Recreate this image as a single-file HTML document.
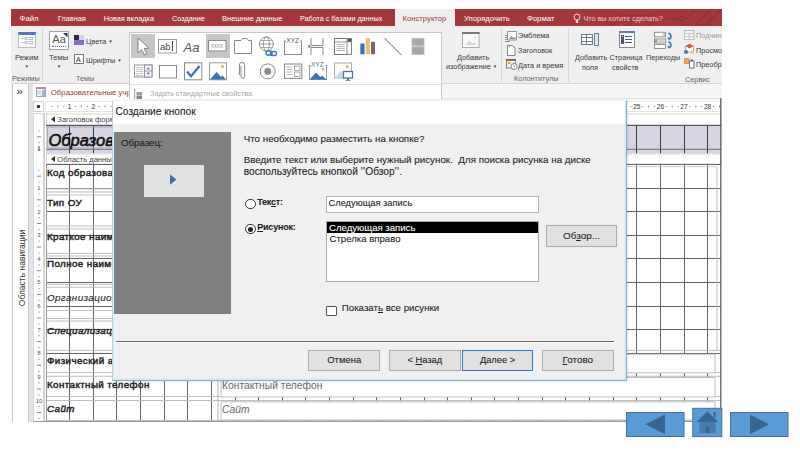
<!DOCTYPE html>
<html><head><meta charset="utf-8">
<style>
*{margin:0;padding:0;box-sizing:border-box}
html,body{width:800px;height:450px;overflow:hidden;background:#fff;font-family:"Liberation Sans",sans-serif}
.a{position:absolute}
.t{position:absolute;white-space:nowrap;line-height:1}
.tabs{position:absolute;left:11px;top:9px;width:711px;height:17px;background:#a4373a;color:#fff;font-size:7.7px}
.tabs .t{top:5.6px}
.rib{position:absolute;left:11px;top:26px;width:711px;height:58px;background:#efefef;border-bottom:1px solid #d4d4d4;font-size:7.3px;color:#444}
.sep{position:absolute;width:1px;background:#d6d6d6}
.dl{-webkit-text-stroke:0.08px currentColor}
</style></head><body>
<!-- tab bar -->
<div class="tabs">
  <span class="t" style="left:8.6px">Файл</span>
  <span class="t" style="left:47px;font-size:7.3px">Главная</span>
  <span class="t" style="left:92.7px;font-size:7.3px">Новая вкладка</span>
  <span class="t" style="left:161px;font-size:7.3px">Создание</span>
  <span class="t" style="left:211px;font-size:7.5px">Внешние данные</span>
  <span class="t" style="left:289px;font-size:7.2px">Работа с базами данных</span>
  <div class="a" style="left:383.5px;top:0;width:60.5px;height:17px;background:#efefef"></div>
  <span class="t" style="left:391.5px;color:#a4373a">Конструктор</span>
  <svg class="a" style="left:0;top:0" width="711" height="17" viewBox="0 0 711 17"><g fill="none" stroke="#8f2b30" stroke-width="1.2" opacity="0.7"><path d="M655 9.5 H668"/><circle cx="670.5" cy="9.5" r="2"/><path d="M672.5 9.5 H676 L684 1"/><path d="M684 17 L700 0"/><path d="M694 17 L710 0"/><path d="M600 17 L612 6 H640"/><path d="M-2 12 L10 3"/></g></svg>
  <span class="t" style="left:453px">Упорядочить</span>
  <span class="t" style="left:516px">Формат</span>
  <svg class="a" style="left:562px;top:3.5px" width="8" height="11" viewBox="0 0 8 11"><circle cx="4" cy="4" r="3" fill="none" stroke="#f3dada" stroke-width="1"/><rect x="2.8" y="7" width="2.4" height="3" fill="#f3dada"/></svg>
  <span class="t" style="left:572.4px;font-size:7.2px;top:5.8px;color:#ecc8c8">Что вы хотите сделать?</span>
</div>
<!-- ribbon -->
<div class="rib"></div>
<div class="a" style="left:0;top:0;width:800px;height:450px;font-size:7.3px;color:#3a3a3a">
  <!-- Режим -->
  <div class="a" style="left:18px;top:32px;width:17.5px;height:16px;background:#fcfcfc;border:1px solid #b8bec8;border-top:3px solid #4a7ab8"></div>
  <div class="a" style="left:21px;top:38px;width:3.5px;height:1px;background:#c0c4cc"></div>
  <div class="a" style="left:24.5px;top:37px;width:8.5px;height:3px;border:1px solid #c0c4cc"></div>
  <div class="a" style="left:21px;top:42px;width:3.5px;height:1px;background:#c0c4cc"></div>
  <div class="a" style="left:24.5px;top:41px;width:8.5px;height:3px;border:1px solid #c0c4cc"></div>
  <span class="t" style="left:15px;top:53.5px;font-size:7.6px">Режим</span>
  <span class="t" style="left:24.6px;top:64.5px;font-size:4.5px">▼</span>
  <span class="t" style="left:12px;top:75.3px;color:#666">Режимы</span>
  <div class="sep" style="left:42px;top:28px;height:54px"></div>
  <!-- Темы -->
  <div class="a" style="left:49px;top:31px;width:20px;height:19px;background:#fff;border:1.5px solid #a0a0a0"></div>
  <span class="t" style="left:52.3px;top:34.3px;font-size:11px;color:#555">Aa</span>
  <div class="a" style="left:62.5px;top:32.5px;width:5px;height:5px;background:#333;clip-path:polygon(0 0,100% 0,100% 100%)"></div>
  <div class="a" style="left:52px;top:46px;width:14px;height:1px;border-top:1px dotted #7a6ab0"></div>
  <span class="t" style="left:49px;top:53.5px;font-size:7.6px">Темы</span>
  <span class="t" style="left:56.8px;top:64.5px;font-size:4.5px">▼</span>
  <!-- Цвета -->
  <div class="a" style="left:74px;top:35px;width:10px;height:10px;background:#8c6cc8"></div>
  <div class="a" style="left:74px;top:35px;width:5px;height:5px;background:#2a2a3a"></div>
  <div class="a" style="left:79px;top:35px;width:5px;height:5px;background:#d8d0e8"></div>
  <span class="t" style="left:86px;top:37.5px;font-size:7.3px">Цвета <span style="font-size:4.5px;vertical-align:1.5px">▼</span></span>
  <!-- Шрифты -->
  <div class="a" style="left:74px;top:54px;width:10px;height:10px;background:#fff;border:1px solid #777"></div>
  <span class="t" style="left:76px;top:56px;font-size:7px;color:#333">A</span>
  <span class="t" style="left:86px;top:56.7px;font-size:7.3px">Шрифты <span style="font-size:4.5px;vertical-align:1.5px">▼</span></span>
  <span class="t" style="left:76px;top:75px;color:#666">Темы</span>
  <!-- Добавить изображение -->
  <svg class="a" style="left:0;top:0" width="800" height="100" viewBox="0 0 800 100">
    <rect x="462.5" y="32.5" width="16.5" height="15" fill="#fafafa" stroke="#a8a8a8" stroke-width="1"/>
    <rect x="462" y="32" width="17.5" height="2" fill="#777"/>
    <path d="M465.5 45 L469.5 40.5 L472.5 43.5 L474 42 L476.5 45 Z" fill="#c8d8e8"/>
    <circle cx="475" cy="37.5" r="0.9" fill="#e8c8a0"/>
    <path d="M507.5 31.5 h9 v8.5 h-9z" fill="#fff" stroke="#7a8a9a" stroke-width="0.9"/>
    <path d="M509 39 L511.5 36 L513.5 38 L515.5 36.5 V39.5z" fill="#7a9ac0"/>
    <path d="M505 35.5 h2 M505 37.5 h2 M505 39.5 h2 M505 41.5 h5" stroke="#777" stroke-width="0.8"/>
    <path d="M507.5 45.5 h5 l2.5 2.5 v7.5 h-7.5z" fill="#fff" stroke="#777" stroke-width="0.9"/>
    <rect x="508.5" y="46.5" width="2" height="1" fill="#f0a040"/>
    <rect x="506.5" y="59.5" width="9" height="8.5" fill="#f8f0e0" stroke="#777" stroke-width="0.9"/>
    <rect x="506" y="59" width="10" height="1.8" fill="#666"/>
    <rect x="508" y="62" width="2.5" height="2" fill="#e8a050"/>
    <circle cx="514" cy="66.5" r="3" fill="#fff" stroke="#5a7fa8" stroke-width="0.9"/>
    <path d="M514 64.8 v1.8 h1.3" fill="none" stroke="#5a7fa8" stroke-width="0.6"/>
  </svg>
  <span class="t" style="left:457px;top:53.5px">Добавить</span>
  <span class="t" style="left:446px;top:63.3px">изображение <span style="font-size:4.5px;vertical-align:1.5px">▼</span></span>
  <div class="sep" style="left:501px;top:28px;height:54px"></div>
  <!-- Колонтитулы -->
  
  <span class="t" style="left:518px;top:32px">Эмблема</span>
  
  <span class="t" style="left:518px;top:46.5px">Заголовок</span>
  
  
  <span class="t" style="left:518px;top:61.5px">Дата и время</span>
  <span class="t" style="left:514px;top:75px;color:#666">Колонтитулы</span>
  <div class="sep" style="left:568px;top:28px;height:54px"></div>
  <!-- Добавить поля -->
  <div class="a" style="left:581px;top:34px;width:12px;height:11px;background:#fff;border:1px solid #6b7b8b"></div>
  <div class="a" style="left:581px;top:37px;width:12px;height:1px;background:#6b7b8b"></div>
  <div class="a" style="left:581px;top:41px;width:12px;height:1px;background:#6b7b8b"></div>
  <div class="a" style="left:586px;top:34px;width:1px;height:11px;background:#6b7b8b"></div>
  <div class="a" style="left:594px;top:33px;width:5px;height:13px;background:#dde6f2;border:1px solid #6b7b8b"></div>
  <span class="t" style="left:575px;top:53.5px">Добавить</span>
  <span class="t" style="left:582px;top:63.5px">поля</span>
  <!-- Страница свойств -->
  <div class="a" style="left:619px;top:31px;width:16px;height:17px;background:#fff;border:1px solid #8a8a8a;border-top:2px solid #4f81bd"></div>
  <div class="a" style="left:622px;top:36px;width:1px;height:1px;box-shadow:0 0 0 1px #556,0 3px 0 1px #556,0 6px 0 1px #556"></div>
  <div class="a" style="left:625px;top:36px;width:7px;height:1px;box-shadow:0 3px 0 #556,0 6px 0 #556;background:#556"></div>
  <span class="t" style="left:609.5px;top:53.5px">Страница</span>
  <span class="t" style="left:612px;top:63.5px">свойств</span>
  <!-- Переходы -->
  <svg class="a" style="left:0;top:0" width="800" height="100" viewBox="0 0 800 100">
    <rect x="654.5" y="32.3" width="11" height="4.5" fill="#fff" stroke="#888" stroke-width="0.9"/>
    <rect x="662.5" y="32.8" width="2.5" height="3.5" fill="#ccc"/>
    <rect x="654.5" y="39" width="11" height="4" fill="#fff" stroke="#888" stroke-width="0.9"/>
    <rect x="655" y="39.5" width="2.5" height="3" fill="#999"/>
    <path d="M658.5 41 h6" stroke="#999" stroke-width="1"/>
    <rect x="654.5" y="44.5" width="11" height="4" fill="#fff" stroke="#888" stroke-width="0.9"/>
    <path d="M668.5 33 q3 1.5 2.5 4.5 q-0.5 1.5 -2.5 2" fill="none" stroke="#3b78c0" stroke-width="1.4"/>
    <path d="M667 38.3 l2.5 -1.5 l0 3z" fill="#3b78c0"/>
    <path d="M668.5 41.5 q3 1.5 2.5 4.5 q-0.5 1.5 -2.5 2" fill="none" stroke="#3b78c0" stroke-width="1.4"/>
    <path d="M667 46.8 l2.5 -1.5 l0 3z" fill="#3b78c0"/>
    <rect x="684.5" y="30.5" width="9.5" height="9" fill="#f6f6f6" stroke="#b8b8b8" stroke-width="0.9"/>
    <path d="M684.5 33.5 h9.5 M684.5 36.5 h9.5 M689 33.5 v6" stroke="#c4c4c4" stroke-width="0.8"/>
    <path d="M685.5 46 h8 v6 h-8z" fill="#fff" stroke="#999" stroke-width="0.8"/>
    <path d="M685.5 46 l4 -2.2 l4 2.2 l-4 2.5z" fill="#d05a48"/>
    <circle cx="686" cy="52" r="2" fill="#3b78c0"/>
    <circle cx="692.5" cy="52.3" r="1.7" fill="#e8d090"/>
    <path d="M684.5 58.5 h4.5 v5 h-4.5z" fill="#f0a060" stroke="#e08040" stroke-width="0.8"/>
    <rect x="689.5" y="61" width="4.5" height="7" fill="#fff" stroke="#4a6a90" stroke-width="0.9"/>
    <rect x="690.5" y="59.5" width="2.5" height="1.5" fill="#4a6a90"/>
  </svg>
  <span class="t" style="left:646px;top:53.5px">Переходы</span>
  <!-- Сервис -->
  <span class="t" style="left:696px;top:32px;color:#a0a0a0">Подчиненная форма</span>
  <span class="t" style="left:696px;top:46.5px">Просмотреть код</span>
  <span class="t" style="left:696px;top:60.5px">Преобразовать</span>
  <span class="t" style="left:685px;top:75.5px;color:#666">Сервис</span>
</div>
<div class="a" style="left:722px;top:0;width:78px;height:450px;background:#fff"></div>
<!-- doc tab strip -->
<div class="a" style="left:11px;top:84px;width:711px;height:14px;background:#f5f5f5"></div>
<!-- nav pane -->
<div class="a" style="left:12px;top:84px;width:17px;height:338px;background:#fff;border-left:1px solid #c8c8c8;border-right:1px solid #c8c8c8"></div>
<div class="a" style="left:29px;top:84px;width:4px;height:338px;background:#e4e4e4"></div>
<!-- form tab -->
<div class="a" style="left:33px;top:84px;width:97px;height:14px;background:#fff"></div>
<span class="t" style="left:16.5px;top:85.8px;font-size:11px;color:#333">»</span>
<span class="t" style="left:21.8px;top:268px;font-size:8.5px;color:#333;transform:translate(-50%,-50%) rotate(-90deg)">Область навигации</span>
<svg class="a" style="left:36px;top:87px" width="10" height="10" viewBox="0 0 10 10"><rect x="0.5" y="0.5" width="9" height="9" fill="#eef2f8" stroke="#9aa5b8" stroke-width="1"/><rect x="0.5" y="0.5" width="9" height="1.5" fill="#c87890"/><rect x="6" y="3" width="3" height="6" fill="#9fb4d8"/><path d="M1.5 4.5h3.5M1.5 6.5h3.5" stroke="#b0b8c8" stroke-width="0.8"/></svg>
<span class="t" style="left:50.8px;top:89px;font-size:7.8px;color:#a4373a">Образовательные учреждения</span>
<!-- designer -->
<!--FORM--><svg class="a" style="left:0;top:0" width="800" height="450" viewBox="0 0 800 450"><rect x="33" y="98" width="689" height="324" fill="#fff"/><rect x="33.5" y="101.5" width="10" height="10" fill="#fff" stroke="#d0d0d0" stroke-width="1"/><rect x="37.2" y="105.2" width="2.6" height="2.6" fill="#000"/><line x1="130" y1="98.8" x2="721" y2="98.8" stroke="#d4d4d4" stroke-width="1"/><rect x="45.5" y="101.5" width="676" height="10" fill="#fff" stroke="#e6e6e6" stroke-width="1"/><rect x="33.5" y="113.5" width="10" height="308" fill="#fff" stroke="#d8d8d8" stroke-width="1"/><line x1="44.5" y1="113" x2="44.5" y2="422" stroke="#cfcfcf" stroke-width="1"/><rect x="51.4" y="106" width="1" height="1" fill="#777"/><rect x="57.3" y="105" width="1" height="3" fill="#aaa"/><rect x="63.2" y="106" width="1" height="1" fill="#777"/><rect x="75.0" y="106" width="1" height="1" fill="#777"/><rect x="80.9" y="105" width="1" height="3" fill="#aaa"/><rect x="86.9" y="106" width="1" height="1" fill="#777"/><rect x="98.7" y="106" width="1" height="1" fill="#777"/><rect x="104.6" y="105" width="1" height="3" fill="#aaa"/><rect x="110.5" y="106" width="1" height="1" fill="#777"/><rect x="122.3" y="106" width="1" height="1" fill="#777"/><rect x="128.2" y="105" width="1" height="3" fill="#aaa"/><rect x="134.1" y="106" width="1" height="1" fill="#777"/><rect x="145.9" y="106" width="1" height="1" fill="#777"/><rect x="151.8" y="105" width="1" height="3" fill="#aaa"/><rect x="157.7" y="106" width="1" height="1" fill="#777"/><rect x="169.6" y="106" width="1" height="1" fill="#777"/><rect x="175.5" y="105" width="1" height="3" fill="#aaa"/><rect x="181.4" y="106" width="1" height="1" fill="#777"/><rect x="193.2" y="106" width="1" height="1" fill="#777"/><rect x="199.1" y="105" width="1" height="3" fill="#aaa"/><rect x="205.0" y="106" width="1" height="1" fill="#777"/><rect x="216.8" y="106" width="1" height="1" fill="#777"/><rect x="222.7" y="105" width="1" height="3" fill="#aaa"/><rect x="228.6" y="106" width="1" height="1" fill="#777"/><rect x="240.4" y="106" width="1" height="1" fill="#777"/><rect x="246.4" y="105" width="1" height="3" fill="#aaa"/><rect x="252.3" y="106" width="1" height="1" fill="#777"/><rect x="264.1" y="106" width="1" height="1" fill="#777"/><rect x="270.0" y="105" width="1" height="3" fill="#aaa"/><rect x="275.9" y="106" width="1" height="1" fill="#777"/><rect x="287.7" y="106" width="1" height="1" fill="#777"/><rect x="293.6" y="105" width="1" height="3" fill="#aaa"/><rect x="299.5" y="106" width="1" height="1" fill="#777"/><rect x="311.3" y="106" width="1" height="1" fill="#777"/><rect x="317.2" y="105" width="1" height="3" fill="#aaa"/><rect x="323.2" y="106" width="1" height="1" fill="#777"/><rect x="335.0" y="106" width="1" height="1" fill="#777"/><rect x="340.9" y="105" width="1" height="3" fill="#aaa"/><rect x="346.8" y="106" width="1" height="1" fill="#777"/><rect x="358.6" y="106" width="1" height="1" fill="#777"/><rect x="364.5" y="105" width="1" height="3" fill="#aaa"/><rect x="370.4" y="106" width="1" height="1" fill="#777"/><rect x="382.2" y="106" width="1" height="1" fill="#777"/><rect x="388.1" y="105" width="1" height="3" fill="#aaa"/><rect x="394.0" y="106" width="1" height="1" fill="#777"/><rect x="405.9" y="106" width="1" height="1" fill="#777"/><rect x="411.8" y="105" width="1" height="3" fill="#aaa"/><rect x="417.7" y="106" width="1" height="1" fill="#777"/><rect x="429.5" y="106" width="1" height="1" fill="#777"/><rect x="435.4" y="105" width="1" height="3" fill="#aaa"/><rect x="441.3" y="106" width="1" height="1" fill="#777"/><rect x="453.1" y="106" width="1" height="1" fill="#777"/><rect x="459.0" y="105" width="1" height="3" fill="#aaa"/><rect x="464.9" y="106" width="1" height="1" fill="#777"/><rect x="476.7" y="106" width="1" height="1" fill="#777"/><rect x="482.7" y="105" width="1" height="3" fill="#aaa"/><rect x="488.6" y="106" width="1" height="1" fill="#777"/><rect x="500.4" y="106" width="1" height="1" fill="#777"/><rect x="506.3" y="105" width="1" height="3" fill="#aaa"/><rect x="512.2" y="106" width="1" height="1" fill="#777"/><rect x="524.0" y="106" width="1" height="1" fill="#777"/><rect x="529.9" y="105" width="1" height="3" fill="#aaa"/><rect x="535.8" y="106" width="1" height="1" fill="#777"/><rect x="547.6" y="106" width="1" height="1" fill="#777"/><rect x="553.5" y="105" width="1" height="3" fill="#aaa"/><rect x="559.5" y="106" width="1" height="1" fill="#777"/><rect x="571.3" y="106" width="1" height="1" fill="#777"/><rect x="577.2" y="105" width="1" height="3" fill="#aaa"/><rect x="583.1" y="106" width="1" height="1" fill="#777"/><rect x="594.9" y="106" width="1" height="1" fill="#777"/><rect x="600.8" y="105" width="1" height="3" fill="#aaa"/><rect x="606.7" y="106" width="1" height="1" fill="#777"/><rect x="618.5" y="106" width="1" height="1" fill="#777"/><rect x="624.4" y="105" width="1" height="3" fill="#aaa"/><rect x="630.3" y="106" width="1" height="1" fill="#777"/><rect x="642.2" y="106" width="1" height="1" fill="#777"/><rect x="648.1" y="105" width="1" height="3" fill="#aaa"/><rect x="654.0" y="106" width="1" height="1" fill="#777"/><rect x="665.8" y="106" width="1" height="1" fill="#777"/><rect x="671.7" y="105" width="1" height="3" fill="#aaa"/><rect x="677.6" y="106" width="1" height="1" fill="#777"/><rect x="689.4" y="106" width="1" height="1" fill="#777"/><rect x="695.3" y="105" width="1" height="3" fill="#aaa"/><rect x="701.2" y="106" width="1" height="1" fill="#777"/><rect x="713.0" y="106" width="1" height="1" fill="#777"/><rect x="719.0" y="105" width="1" height="3" fill="#aaa"/><rect x="46.5" y="114.0" width="675" height="10.5" fill="#fff" stroke="#d8d8d8" stroke-width="1"/><path d="M55 116.2 L51 119.2 L55 122.2 Z" fill="#333"/><rect x="46" y="125" width="675.5" height="28.5" fill="#d6d5e1"/><line x1="69.5" y1="125" x2="69.5" y2="153.5" stroke="#3c3c44" stroke-width="1"/><line x1="93.5" y1="125" x2="93.5" y2="153.5" stroke="#3c3c44" stroke-width="1"/><line x1="116.5" y1="125" x2="116.5" y2="153.5" stroke="#3c3c44" stroke-width="1"/><line x1="140.5" y1="125" x2="140.5" y2="153.5" stroke="#3c3c44" stroke-width="1"/><line x1="164.5" y1="125" x2="164.5" y2="153.5" stroke="#3c3c44" stroke-width="1"/><line x1="187.5" y1="125" x2="187.5" y2="153.5" stroke="#3c3c44" stroke-width="1"/><line x1="211.5" y1="125" x2="211.5" y2="153.5" stroke="#3c3c44" stroke-width="1"/><line x1="235.5" y1="125" x2="235.5" y2="153.5" stroke="#3c3c44" stroke-width="1"/><line x1="258.5" y1="125" x2="258.5" y2="153.5" stroke="#3c3c44" stroke-width="1"/><line x1="282.5" y1="125" x2="282.5" y2="153.5" stroke="#3c3c44" stroke-width="1"/><line x1="305.5" y1="125" x2="305.5" y2="153.5" stroke="#3c3c44" stroke-width="1"/><line x1="329.5" y1="125" x2="329.5" y2="153.5" stroke="#3c3c44" stroke-width="1"/><line x1="353.5" y1="125" x2="353.5" y2="153.5" stroke="#3c3c44" stroke-width="1"/><line x1="376.5" y1="125" x2="376.5" y2="153.5" stroke="#3c3c44" stroke-width="1"/><line x1="400.5" y1="125" x2="400.5" y2="153.5" stroke="#3c3c44" stroke-width="1"/><line x1="424.5" y1="125" x2="424.5" y2="153.5" stroke="#3c3c44" stroke-width="1"/><line x1="447.5" y1="125" x2="447.5" y2="153.5" stroke="#3c3c44" stroke-width="1"/><line x1="471.5" y1="125" x2="471.5" y2="153.5" stroke="#3c3c44" stroke-width="1"/><line x1="494.5" y1="125" x2="494.5" y2="153.5" stroke="#3c3c44" stroke-width="1"/><line x1="518.5" y1="125" x2="518.5" y2="153.5" stroke="#3c3c44" stroke-width="1"/><line x1="542.5" y1="125" x2="542.5" y2="153.5" stroke="#3c3c44" stroke-width="1"/><line x1="565.5" y1="125" x2="565.5" y2="153.5" stroke="#3c3c44" stroke-width="1"/><line x1="589.5" y1="125" x2="589.5" y2="153.5" stroke="#3c3c44" stroke-width="1"/><line x1="613.5" y1="125" x2="613.5" y2="153.5" stroke="#3c3c44" stroke-width="1"/><line x1="636.5" y1="125" x2="636.5" y2="153.5" stroke="#3c3c44" stroke-width="1"/><line x1="660.5" y1="125" x2="660.5" y2="153.5" stroke="#3c3c44" stroke-width="1"/><line x1="684.5" y1="125" x2="684.5" y2="153.5" stroke="#3c3c44" stroke-width="1"/><line x1="707.5" y1="125" x2="707.5" y2="153.5" stroke="#3c3c44" stroke-width="1"/><line x1="46" y1="149.3" x2="721.5" y2="149.3" stroke="#6a6a78" stroke-width="1"/><line x1="46" y1="125.5" x2="721.5" y2="125.5" stroke="#55555f" stroke-width="1"/><rect x="47.5" y="127" width="80" height="21" fill="none" stroke="#a0a0b0" stroke-width="0.8"/><rect x="46.5" y="154.0" width="675" height="10.0" fill="#fff" stroke="#d8d8d8" stroke-width="1"/><path d="M55 156.0 L51 159.0 L55 162.0 Z" fill="#333"/><line x1="46" y1="164.5" x2="721" y2="164.5" stroke="#656565" stroke-width="1"/><line x1="46" y1="188.5" x2="721" y2="188.5" stroke="#656565" stroke-width="1"/><line x1="46" y1="211.5" x2="721" y2="211.5" stroke="#656565" stroke-width="1"/><line x1="46" y1="235.5" x2="721" y2="235.5" stroke="#656565" stroke-width="1"/><line x1="46" y1="258.5" x2="721" y2="258.5" stroke="#656565" stroke-width="1"/><line x1="46" y1="282.5" x2="721" y2="282.5" stroke="#656565" stroke-width="1"/><line x1="46" y1="306.5" x2="721" y2="306.5" stroke="#656565" stroke-width="1"/><line x1="46" y1="329.5" x2="721" y2="329.5" stroke="#656565" stroke-width="1"/><line x1="46" y1="353.5" x2="721" y2="353.5" stroke="#656565" stroke-width="1"/><line x1="69.5" y1="164.4" x2="69.5" y2="421" stroke="#656565" stroke-width="1"/><line x1="93.5" y1="164.4" x2="93.5" y2="421" stroke="#656565" stroke-width="1"/><line x1="116.5" y1="164.4" x2="116.5" y2="421" stroke="#656565" stroke-width="1"/><line x1="140.5" y1="164.4" x2="140.5" y2="421" stroke="#656565" stroke-width="1"/><line x1="164.5" y1="164.4" x2="164.5" y2="421" stroke="#656565" stroke-width="1"/><line x1="187.5" y1="164.4" x2="187.5" y2="421" stroke="#656565" stroke-width="1"/><line x1="211.5" y1="164.4" x2="211.5" y2="421" stroke="#656565" stroke-width="1"/><line x1="235.5" y1="164.4" x2="235.5" y2="421" stroke="#656565" stroke-width="1"/><line x1="258.5" y1="164.4" x2="258.5" y2="421" stroke="#656565" stroke-width="1"/><line x1="282.5" y1="164.4" x2="282.5" y2="421" stroke="#656565" stroke-width="1"/><line x1="305.5" y1="164.4" x2="305.5" y2="421" stroke="#656565" stroke-width="1"/><line x1="329.5" y1="164.4" x2="329.5" y2="421" stroke="#656565" stroke-width="1"/><line x1="353.5" y1="164.4" x2="353.5" y2="421" stroke="#656565" stroke-width="1"/><line x1="376.5" y1="164.4" x2="376.5" y2="421" stroke="#656565" stroke-width="1"/><line x1="400.5" y1="164.4" x2="400.5" y2="421" stroke="#656565" stroke-width="1"/><line x1="424.5" y1="164.4" x2="424.5" y2="421" stroke="#656565" stroke-width="1"/><line x1="447.5" y1="164.4" x2="447.5" y2="421" stroke="#656565" stroke-width="1"/><line x1="471.5" y1="164.4" x2="471.5" y2="421" stroke="#656565" stroke-width="1"/><line x1="494.5" y1="164.4" x2="494.5" y2="421" stroke="#656565" stroke-width="1"/><line x1="518.5" y1="164.4" x2="518.5" y2="421" stroke="#656565" stroke-width="1"/><line x1="542.5" y1="164.4" x2="542.5" y2="421" stroke="#656565" stroke-width="1"/><line x1="565.5" y1="164.4" x2="565.5" y2="421" stroke="#656565" stroke-width="1"/><line x1="589.5" y1="164.4" x2="589.5" y2="421" stroke="#656565" stroke-width="1"/><line x1="613.5" y1="164.4" x2="613.5" y2="421" stroke="#656565" stroke-width="1"/><line x1="636.5" y1="164.4" x2="636.5" y2="421" stroke="#656565" stroke-width="1"/><line x1="660.5" y1="164.4" x2="660.5" y2="421" stroke="#656565" stroke-width="1"/><line x1="684.5" y1="164.4" x2="684.5" y2="421" stroke="#656565" stroke-width="1"/><line x1="707.5" y1="164.4" x2="707.5" y2="421" stroke="#656565" stroke-width="1"/><line x1="46" y1="188.8" x2="220" y2="188.8" stroke="#b8b8b8" stroke-width="0.9"/><line x1="46" y1="192" x2="220" y2="192" stroke="#b8b8b8" stroke-width="0.9"/><line x1="46" y1="195" x2="220" y2="195" stroke="#b8b8b8" stroke-width="0.9"/><line x1="46" y1="226" x2="220" y2="226" stroke="#b8b8b8" stroke-width="0.9"/><line x1="46" y1="229" x2="220" y2="229" stroke="#b8b8b8" stroke-width="0.9"/><line x1="46" y1="253.4" x2="220" y2="253.4" stroke="#b8b8b8" stroke-width="0.9"/><line x1="46" y1="256" x2="220" y2="256" stroke="#b8b8b8" stroke-width="0.9"/><line x1="46" y1="284.4" x2="220" y2="284.4" stroke="#b8b8b8" stroke-width="0.9"/><line x1="46" y1="287.3" x2="220" y2="287.3" stroke="#b8b8b8" stroke-width="0.9"/><line x1="46" y1="310.4" x2="220" y2="310.4" stroke="#b8b8b8" stroke-width="0.9"/><line x1="46" y1="318.5" x2="220" y2="318.5" stroke="#b8b8b8" stroke-width="0.9"/><line x1="46" y1="321" x2="220" y2="321" stroke="#b8b8b8" stroke-width="0.9"/><line x1="46" y1="350.4" x2="721" y2="350.4" stroke="#b8b8b8" stroke-width="0.9"/><line x1="46" y1="372.5" x2="721" y2="372.5" stroke="#b8b8b8" stroke-width="0.9"/><line x1="46" y1="376.3" x2="721" y2="376.3" stroke="#b8b8b8" stroke-width="0.9"/><line x1="46" y1="396.5" x2="721" y2="396.5" stroke="#b8b8b8" stroke-width="0.9"/><line x1="46" y1="400.5" x2="721" y2="400.5" stroke="#b8b8b8" stroke-width="0.9"/><line x1="46" y1="420.5" x2="721" y2="420.5" stroke="#b8b8b8" stroke-width="0.9"/><line x1="626" y1="166.7" x2="717" y2="166.7" stroke="#c4c4c4" stroke-width="0.9"/><line x1="46.5" y1="164.4" x2="46.5" y2="421" stroke="#999" stroke-width="1"/><rect x="221" y="354.3" width="494" height="18.5" fill="#fff" stroke="#c0c0c0" stroke-width="1"/><rect x="221" y="377.5" width="494" height="19.5" fill="#fff" stroke="#c0c0c0" stroke-width="1"/><rect x="221" y="401.8" width="494" height="18.2" fill="#fff" stroke="#c0c0c0" stroke-width="1"/><line x1="218" y1="376" x2="218" y2="421" stroke="#b0b0b0" stroke-width="1"/><line x1="720.8" y1="98" x2="720.8" y2="422" stroke="#555" stroke-width="1.2"/><line x1="717" y1="166.5" x2="717" y2="350" stroke="#c0c0c0" stroke-width="1"/><line x1="33" y1="421.5" x2="721" y2="421.5" stroke="#999" stroke-width="1"/><rect x="38.5" y="130.4" width="1" height="1" fill="#777"/><rect x="37" y="136.3" width="4" height="1" fill="#888"/><rect x="38.5" y="142.2" width="1" height="1" fill="#777"/><rect x="38.5" y="169.8" width="1" height="1" fill="#777"/><rect x="37" y="175.7" width="4" height="1" fill="#888"/><rect x="38.5" y="181.6" width="1" height="1" fill="#777"/><rect x="38.5" y="193.4" width="1" height="1" fill="#777"/><rect x="37" y="199.3" width="4" height="1" fill="#888"/><rect x="38.5" y="205.3" width="1" height="1" fill="#777"/><rect x="38.5" y="217.1" width="1" height="1" fill="#777"/><rect x="37" y="223.0" width="4" height="1" fill="#888"/><rect x="38.5" y="228.9" width="1" height="1" fill="#777"/><rect x="38.5" y="240.7" width="1" height="1" fill="#777"/><rect x="37" y="246.6" width="4" height="1" fill="#888"/><rect x="38.5" y="252.5" width="1" height="1" fill="#777"/><rect x="38.5" y="264.3" width="1" height="1" fill="#777"/><rect x="37" y="270.2" width="4" height="1" fill="#888"/><rect x="38.5" y="276.1" width="1" height="1" fill="#777"/><rect x="38.5" y="288.0" width="1" height="1" fill="#777"/><rect x="37" y="293.9" width="4" height="1" fill="#888"/><rect x="38.5" y="299.8" width="1" height="1" fill="#777"/><rect x="38.5" y="311.6" width="1" height="1" fill="#777"/><rect x="37" y="317.5" width="4" height="1" fill="#888"/><rect x="38.5" y="323.4" width="1" height="1" fill="#777"/><rect x="38.5" y="335.2" width="1" height="1" fill="#777"/><rect x="37" y="341.1" width="4" height="1" fill="#888"/><rect x="38.5" y="347.0" width="1" height="1" fill="#777"/><rect x="38.5" y="358.8" width="1" height="1" fill="#777"/><rect x="37" y="364.8" width="4" height="1" fill="#888"/><rect x="38.5" y="370.7" width="1" height="1" fill="#777"/><rect x="38.5" y="382.5" width="1" height="1" fill="#777"/><rect x="37" y="388.4" width="4" height="1" fill="#888"/><rect x="38.5" y="394.3" width="1" height="1" fill="#777"/><rect x="38.5" y="406.1" width="1" height="1" fill="#777"/><rect x="37" y="412.0" width="4" height="1" fill="#888"/><rect x="38.5" y="417.9" width="1" height="1" fill="#777"/></svg><span class="t" style="left:61.6px;top:104px;width:16px;text-align:center;font-size:6.6px;color:#333">1</span><span class="t" style="left:85.3px;top:104px;width:16px;text-align:center;font-size:6.6px;color:#333">2</span><span class="t" style="left:108.9px;top:104px;width:16px;text-align:center;font-size:6.6px;color:#333">3</span><span class="t" style="left:132.5px;top:104px;width:16px;text-align:center;font-size:6.6px;color:#333">4</span><span class="t" style="left:156.1px;top:104px;width:16px;text-align:center;font-size:6.6px;color:#333">5</span><span class="t" style="left:179.8px;top:104px;width:16px;text-align:center;font-size:6.6px;color:#333">6</span><span class="t" style="left:203.4px;top:104px;width:16px;text-align:center;font-size:6.6px;color:#333">7</span><span class="t" style="left:227.0px;top:104px;width:16px;text-align:center;font-size:6.6px;color:#333">8</span><span class="t" style="left:250.7px;top:104px;width:16px;text-align:center;font-size:6.6px;color:#333">9</span><span class="t" style="left:274.3px;top:104px;width:16px;text-align:center;font-size:6.6px;color:#333">10</span><span class="t" style="left:297.9px;top:104px;width:16px;text-align:center;font-size:6.6px;color:#333">11</span><span class="t" style="left:321.6px;top:104px;width:16px;text-align:center;font-size:6.6px;color:#333">12</span><span class="t" style="left:345.2px;top:104px;width:16px;text-align:center;font-size:6.6px;color:#333">13</span><span class="t" style="left:368.8px;top:104px;width:16px;text-align:center;font-size:6.6px;color:#333">14</span><span class="t" style="left:392.4px;top:104px;width:16px;text-align:center;font-size:6.6px;color:#333">15</span><span class="t" style="left:416.1px;top:104px;width:16px;text-align:center;font-size:6.6px;color:#333">16</span><span class="t" style="left:439.7px;top:104px;width:16px;text-align:center;font-size:6.6px;color:#333">17</span><span class="t" style="left:463.3px;top:104px;width:16px;text-align:center;font-size:6.6px;color:#333">18</span><span class="t" style="left:487.0px;top:104px;width:16px;text-align:center;font-size:6.6px;color:#333">19</span><span class="t" style="left:510.6px;top:104px;width:16px;text-align:center;font-size:6.6px;color:#333">20</span><span class="t" style="left:534.2px;top:104px;width:16px;text-align:center;font-size:6.6px;color:#333">21</span><span class="t" style="left:557.9px;top:104px;width:16px;text-align:center;font-size:6.6px;color:#333">22</span><span class="t" style="left:581.5px;top:104px;width:16px;text-align:center;font-size:6.6px;color:#333">23</span><span class="t" style="left:605.1px;top:104px;width:16px;text-align:center;font-size:6.6px;color:#333">24</span><span class="t" style="left:628.8px;top:104px;width:16px;text-align:center;font-size:6.6px;color:#333">25</span><span class="t" style="left:652.4px;top:104px;width:16px;text-align:center;font-size:6.6px;color:#333">26</span><span class="t" style="left:676.0px;top:104px;width:16px;text-align:center;font-size:6.6px;color:#333">27</span><span class="t" style="left:699.6px;top:104px;width:16px;text-align:center;font-size:6.6px;color:#333">28</span><span class="t" style="left:57.3px;top:116.3px;font-size:7.6px;color:#444">Заголовок формы</span><span class="t" style="left:57.3px;top:156.1px;font-size:7.6px;color:#444">Область данных</span><span class="t" style="left:34px;top:145.4px;width:10px;text-align:center;font-size:6px;color:#555">1</span><span class="t" style="left:34px;top:184.8px;width:10px;text-align:center;font-size:6px;color:#555">1</span><span class="t" style="left:34px;top:208.5px;width:10px;text-align:center;font-size:6px;color:#555">2</span><span class="t" style="left:34px;top:232.1px;width:10px;text-align:center;font-size:6px;color:#555">3</span><span class="t" style="left:34px;top:255.7px;width:10px;text-align:center;font-size:6px;color:#555">4</span><span class="t" style="left:34px;top:279.4px;width:10px;text-align:center;font-size:6px;color:#555">5</span><span class="t" style="left:34px;top:303.0px;width:10px;text-align:center;font-size:6px;color:#555">6</span><span class="t" style="left:34px;top:326.6px;width:10px;text-align:center;font-size:6px;color:#555">7</span><span class="t" style="left:34px;top:350.2px;width:10px;text-align:center;font-size:6px;color:#555">8</span><span class="t" style="left:34px;top:373.9px;width:10px;text-align:center;font-size:6px;color:#555">9</span><span class="t" style="left:34px;top:397.5px;width:10px;text-align:center;font-size:6px;color:#555">10</span><span class="t" style="left:34px;top:146px;width:10px;text-align:center;font-size:6px;color:#555">1</span><span class="t" style="left:47px;top:167.5px;font-size:9.8px;letter-spacing:0.4px;-webkit-text-stroke:0.45px #222;color:#222;font-style:normal">Код образовательного</span><span class="t" style="left:47px;top:198.0px;font-size:9.8px;letter-spacing:0.4px;-webkit-text-stroke:0.45px #222;color:#222;font-style:normal">Тип ОУ</span><span class="t" style="left:47px;top:231.7px;font-size:9.8px;letter-spacing:0.4px;-webkit-text-stroke:0.45px #222;color:#222;font-style:normal">Краткое наименование</span><span class="t" style="left:47px;top:259.3px;font-size:9.8px;letter-spacing:0.4px;-webkit-text-stroke:0.45px #222;color:#222;font-style:normal">Полное наименование</span><span class="t" style="left:47px;top:293.2px;font-size:9.8px;letter-spacing:0.4px;-webkit-text-stroke:0.45px #222;color:#222;font-style:italic;-webkit-text-stroke:0.15px #444">Организационно</span><span class="t" style="left:47px;top:325.6px;font-size:9.8px;letter-spacing:0.4px;-webkit-text-stroke:0.45px #222;color:#222;font-style:italic">Специализация</span><span class="t" style="left:47px;top:356.0px;font-size:9.8px;letter-spacing:0.4px;-webkit-text-stroke:0.45px #222;color:#222;font-style:normal">Физический адрес</span><span class="t" style="left:47px;top:380.0px;font-size:9.8px;letter-spacing:0.4px;-webkit-text-stroke:0.45px #222;color:#222;font-style:normal">Контактный телефон</span><span class="t" style="left:47px;top:404.0px;font-size:9.8px;letter-spacing:0.4px;-webkit-text-stroke:0.45px #222;color:#222;font-style:italic">Сайт</span><span class="t" style="left:48.5px;top:131.7px;font-size:16.5px;font-style:italic;color:#111;-webkit-text-stroke:0.6px #111">Образовательные учреждения</span><span class="t" style="left:222px;top:380.5px;font-size:10.3px;color:#666">Контактный телефон</span><span class="t" style="left:222px;top:404.5px;font-size:10.3px;font-style:italic;color:#666">Сайт</span><!--/FORM-->
<!-- gallery -->
<div class="a" style="left:129px;top:32px;width:313px;height:67px;background:#fff;border:1px solid #c8c8c8;border-bottom:none"></div>
<svg class="a" style="left:0;top:0" width="800" height="450" viewBox="0 0 800 450">
  <rect x="131" y="34" width="24" height="24" fill="#c6c6c6"/>
  <rect x="206" y="34" width="24" height="24" fill="#c6c6c6"/>
  <!-- pointer -->
  <path d="M138 38 L138 53 L141.5 49.5 L144.5 55 L147 53.8 L144.2 48.5 L149 48.2 Z" fill="#fff" stroke="#777" stroke-width="0.9" stroke-linejoin="round"/>
  <!-- ab| -->
  <rect x="158.5" y="39.5" width="18" height="13.5" fill="#fff" stroke="#999" stroke-width="1"/>
  <text x="160" y="50" font-size="9.5" fill="#444" font-family="Liberation Sans">ab</text>
  <rect x="172" y="41" width="1" height="10" fill="#444"/>
  <!-- Aa -->
  <text x="183.5" y="52" font-size="13" font-style="italic" fill="#555" font-family="Liberation Sans">Aa</text>
  <!-- button -->
  <rect x="208.5" y="40.5" width="17.5" height="10.5" fill="#fff" stroke="#888" stroke-width="1"/>
  <text x="211" y="48" font-size="4.5" fill="#888" font-family="Liberation Sans">XXXX</text>
  <!-- folder -->
  <path d="M234.5 40.5 L241 40.5 L242.5 38.5 L247 38.5 L248.5 40.5 L251.5 40.5 L251.5 53.5 L234.5 53.5 Z" fill="#fff" stroke="#888" stroke-width="1"/>
  <!-- globe -->
  <circle cx="266.4" cy="44" r="7" fill="#fff" stroke="#888" stroke-width="0.9"/>
  <ellipse cx="266.4" cy="44" rx="3" ry="7" fill="none" stroke="#888" stroke-width="0.8"/>
  <line x1="259.4" y1="44" x2="273.4" y2="44" stroke="#888" stroke-width="0.8"/>
  <line x1="260.5" y1="40.5" x2="272.3" y2="40.5" stroke="#888" stroke-width="0.7"/>
  <line x1="260.5" y1="47.5" x2="272.3" y2="47.5" stroke="#888" stroke-width="0.7"/>
  <rect x="266" y="51" width="6" height="4" rx="2" fill="none" stroke="#3b78c0" stroke-width="1.4"/>
  <rect x="270.5" y="51.5" width="6" height="4" rx="2" fill="none" stroke="#3b78c0" stroke-width="1.4"/>
  <!-- XYZ frame -->
  <rect x="284.5" y="41" width="17" height="13.5" fill="#fff" stroke="#888" stroke-width="1"/>
  <rect x="286" y="37" width="14" height="6" fill="#fff"/>
  <text x="286.3" y="43" font-size="6.5" fill="#555" font-family="Liberation Sans">XYZ</text>
  <!-- page break -->
  <path d="M311 38 V45.5 H323 V38 M311 55 V47.5 H323 V55" fill="none" stroke="#888" stroke-width="1"/>
  <path d="M308.5 44.5 L311 46.5 L308.5 48.5Z" fill="#3b78c0"/>
  <!-- combo/list -->
  <rect x="334.5" y="38.5" width="17" height="16" fill="#fff" stroke="#777" stroke-width="1"/>
  <rect x="347" y="38.5" width="4.5" height="16" fill="#fff" stroke="#777" stroke-width="0.8"/>
  <rect x="347.5" y="39" width="3.5" height="3" fill="#555"/>
  <line x1="334.5" y1="42" x2="347" y2="42" stroke="#777" stroke-width="0.8"/>
  <path d="M336.5 44.5h8M336.5 46.5h8M336.5 48.5h8M336.5 50.5h8" stroke="#999" stroke-width="0.7"/>
  <!-- chart -->
  <rect x="360.3" y="43.5" width="4.3" height="10.8" fill="#3d72b4"/>
  <rect x="365.7" y="38.3" width="4.2" height="16" fill="#e8c070"/>
  <rect x="371" y="41.8" width="4" height="12.5" fill="#707070"/>
  <!-- line -->
  <line x1="384.5" y1="38" x2="401.5" y2="55.2" stroke="#666" stroke-width="1"/>
  <!-- gray boxes -->
  <rect x="412" y="38.3" width="12" height="7.5" fill="#a8a8a8" stroke="#bbb" stroke-width="0.8"/>
  <rect x="412" y="46.8" width="12" height="7.7" fill="#a8a8a8" stroke="#bbb" stroke-width="0.8"/>
  <!-- row 2 -->
  <rect x="134.5" y="65" width="17.5" height="12" fill="#fff" stroke="#889" stroke-width="0.9"/>
  <path d="M136 67.5h7M136 69.5h7M136 71.5h7M136 73.5h7M136 75.5h7" stroke="#aaa" stroke-width="0.7"/>
  <rect x="144.5" y="65" width="7.5" height="12" fill="#f2f6fa" stroke="#889" stroke-width="0.9"/>
  <line x1="144.5" y1="71" x2="152" y2="71" stroke="#889" stroke-width="0.8"/>
  <path d="M146.5 69.3 L148.2 67.5 L150 69.3Z M146.5 72.7 L148.2 74.5 L150 72.7Z" fill="#555"/>
  <rect x="159.5" y="65.5" width="17" height="12.5" fill="#fff" stroke="#888" stroke-width="1"/>
  <rect x="184.5" y="62.8" width="17.3" height="17" fill="#fff" stroke="#888" stroke-width="1"/>
  <path d="M187 71.5 L191 76.3 L199.5 66" fill="none" stroke="#3d72b4" stroke-width="2.2"/>
  <rect x="209.5" y="62.8" width="17" height="17" fill="#fff" stroke="#999" stroke-width="1"/>
  <path d="M210 79.5 L216.5 72 L221 77 L222.5 75.5 L226 79.5Z" fill="#3d72b4"/>
  <circle cx="222.5" cy="66.5" r="1.6" fill="#e8b850"/>
  <!-- paperclip -->
  <path d="M241 66 V76.5 A1.8 1.8 0 0 0 244.6 76.5 V65 A2.6 2.6 0 0 0 239.4 65 V75" fill="none" stroke="#888" stroke-width="1"/>
  <!-- radio -->
  <circle cx="267.7" cy="71.4" r="7.5" fill="#fff" stroke="#888" stroke-width="1"/>
  <circle cx="267.7" cy="71.4" r="3.4" fill="#888"/>
  <!-- list control -->
  <rect x="284.5" y="64" width="17.3" height="14.4" fill="#fff" stroke="#888" stroke-width="1"/>
  <path d="M286.5 67h6M286.5 69.5h6M286.5 72h6M286.5 74.5h6" stroke="#aaa" stroke-width="0.8"/>
  <rect x="294.5" y="66" width="5.5" height="4.5" fill="#fff" stroke="#999" stroke-width="0.8"/>
  <rect x="294.5" y="72" width="5.5" height="4.5" fill="#fff" stroke="#999" stroke-width="0.8"/>
  <!-- XYZ image -->
  <rect x="309.5" y="65.5" width="17" height="14" fill="#fff" stroke="#999" stroke-width="1"/>
  <path d="M309.5 79.5 L316 72.5 L320.5 77 L322 75.5 L326.5 79.5Z" fill="#3d72b4"/>
  <circle cx="323" cy="69" r="1.5" fill="#e8b850"/>
  <rect x="311" y="61.5" width="14" height="5.5" fill="#fff"/>
  <text x="311" y="67.3" font-size="6.5" fill="#3d72b4" font-family="Liberation Sans">XYZ</text>
  <!-- image monitor -->
  <rect x="334.5" y="63" width="17" height="15" fill="#fff" stroke="#aaa" stroke-width="1"/>
  <path d="M335 78 L341 70.5 L345 75 L345 78Z" fill="#c8d8ea"/>
  <circle cx="347.3" cy="66.5" r="1.5" fill="#e8b850"/>
  <rect x="343.5" y="71.5" width="9" height="6.5" fill="#fff" stroke="#3d72b4" stroke-width="1.2"/>
  <path d="M347 78.5 h2 v1.5 h1.5 v0.8 h-5 v-0.8 h1.5z" fill="#3d72b4"/>
  <!-- separator & set default -->
  <line x1="130" y1="84.5" x2="441" y2="84.5" stroke="#e2e2e2" stroke-width="1"/>
  <rect x="134" y="89" width="1.2" height="10" fill="#aaa"/>
  <rect x="136.5" y="92" width="5.5" height="3" fill="#999"/>
  <rect x="136.5" y="95.5" width="5.5" height="3.5" fill="#888"/>
</svg>
<span class="t" style="left:150px;top:89.5px;font-size:7.3px;color:#a8a8a8">Задать стан<u>д</u>артные свойства</span>
<!-- dialog -->
<!--DLG-->
<div class="a" style="left:112px;top:99.5px;width:514.5px;height:281px;background:#f0f0f0;border:1px solid #8eaec6;border-top-color:#e6f0f6;border-left-color:#b8cfe0;box-shadow:inset -1.5px -1.5px 0 #cdebf7,inset 1px 0 0 #dceff8,1px 1px 2px rgba(0,0,0,.1)"></div>
<div class="a" style="left:113px;top:100.5px;width:512px;height:23.5px;background:#fff"></div>
<span class="t dl" style="left:115.5px;top:106.7px;font-size:10.2px;color:#222">Создание кнопок</span>
<div class="a" style="left:114px;top:131.5px;width:117px;height:182.5px;background:#808080"></div>
<span class="t dl" style="left:121px;top:138px;font-size:9.7px;color:#1a1a1a">Образец:</span>
<div class="a" style="left:144px;top:164.5px;width:60px;height:32px;background:#e1e1e1"></div>
<div class="a" style="left:169.8px;top:174.2px;width:6.6px;height:10.7px;background:#3f6fa8;clip-path:polygon(0 0,100% 50%,0 100%)"></div>
<span class="t dl" style="left:243.7px;top:133.5px;font-size:9.8px;color:#1a1a1a">Что необходимо разместить на кнопке?</span>
<span class="t dl" style="left:243.7px;top:155px;font-size:9.8px;color:#1a1a1a">Введите текст или выберите нужный рисунок.&nbsp; Для поиска рисунка на диске</span>
<span class="t dl" style="left:243.7px;top:166.5px;font-size:10.2px;color:#1a1a1a">воспользуйтесь кнопкой <span style="letter-spacing:0.3px">''</span>Обзор<span style="letter-spacing:0.3px">''</span>.</span>
<div class="a" style="left:245px;top:198.7px;width:10.6px;height:10.6px;border-radius:50%;background:#fff;border:1px solid #333"></div>
<span class="t dl" style="left:257.2px;top:197.5px;font-size:9px;font-weight:bold;letter-spacing:-0.2px;color:#222">Тек<u>с</u>т:</span>
<div class="a" style="left:245px;top:223.9px;width:10.6px;height:10.6px;border-radius:50%;background:#fff;border:1px solid #333"></div>
<div class="a" style="left:247.8px;top:226.7px;width:5px;height:5px;border-radius:50%;background:#222"></div>
<span class="t dl" style="left:257.2px;top:222.5px;font-size:9px;font-weight:bold;letter-spacing:-0.2px;color:#222"><u>Р</u>исунок:</span>
<div class="a" style="left:326px;top:196px;width:213px;height:17px;background:#fff;border:1px solid #b4b4b4"></div>
<span class="t dl" style="left:328.5px;top:198.7px;font-size:9.3px;color:#1a1a1a">Следующая запись</span>
<div class="a" style="left:326px;top:221px;width:213px;height:61px;background:#fff;border:1px solid #a8a8a8"></div>
<div class="a" style="left:327px;top:221.6px;width:211px;height:11.4px;background:#000"></div>
<span class="t dl" style="left:329px;top:222.5px;font-size:9.6px;color:#fff">Следующая запись</span>
<span class="t dl" style="left:329.5px;top:234px;font-size:9.6px;color:#1a1a1a">Стрелка вправо</span>
<div class="a" style="left:546px;top:225px;width:71px;height:21.5px;background:#e1e1e1;border:1px solid #adadad"></div>
<span class="t dl" style="left:546px;top:231px;width:71px;text-align:center;font-size:9.9px;color:#1a1a1a">Об<u>з</u>ор...</span>
<div class="a" style="left:326px;top:305.6px;width:10.5px;height:10.5px;background:#fff;border:1px solid #555;border-radius:1px"></div>
<span class="t dl" style="left:341.8px;top:303px;font-size:9.7px;color:#1a1a1a">Показат<u>ь</u> все рисунки</span>
<div class="a" style="left:116px;top:340.8px;width:497.6px;height:1.2px;background:#6a6a6a"></div>
<div class="a" style="left:116px;top:342px;width:497.6px;height:1px;background:#fff"></div>
<div class="a" style="left:308.4px;top:349.5px;width:71.6px;height:21px;background:#e1e1e1;border:1px solid #adadad"></div>
<span class="t dl" style="left:308.4px;top:355px;width:71.6px;text-align:center;font-size:9.5px;color:#1a1a1a">Отмена</span>
<div class="a" style="left:389px;top:349.5px;width:71.6px;height:21px;background:#e1e1e1;border:1px solid #adadad"></div>
<span class="t dl" style="left:389px;top:356px;width:71.6px;text-align:center;font-size:9.3px;color:#1a1a1a">&lt; <u>Н</u>азад</span>
<div class="a" style="left:462px;top:349.5px;width:71px;height:21px;background:#e1e1e1;border:1.5px solid #2b7bd0"></div>
<span class="t dl" style="left:462px;top:356px;width:71px;text-align:center;font-size:9.3px;color:#1a1a1a"><u>Д</u>алее &gt;</span>
<div class="a" style="left:542px;top:349.5px;width:71.6px;height:21px;background:#e1e1e1;border:1px solid #adadad"></div>
<span class="t dl" style="left:542px;top:355px;width:71.6px;text-align:center;font-size:9.9px;color:#1a1a1a"><u>Г</u>отово</span>
<!--/DLG-->
<!-- nav buttons -->
<svg class="a" style="left:0;top:0" width="800" height="450" viewBox="0 0 800 450">
  <line x1="626" y1="420.3" x2="721" y2="420.3" stroke="#c8c8c8" stroke-width="1"/>
  <rect x="626.5" y="412.5" width="57.5" height="24" fill="#5b9bd5" stroke="#41719c" stroke-width="1"/>
  <path d="M645.5 424.3 L665 414.6 L665 434.2 Z" fill="#3a6591"/>
  <rect x="692.8" y="408.3" width="29" height="28.3" fill="#5b9bd5" stroke="#41719c" stroke-width="1"/>
  <path d="M696.5 422 L707.3 411.3 L718.3 422 Z" fill="#3a6591"/>
  <rect x="713.5" y="412" width="2.2" height="5" fill="#3a6591"/>
  <rect x="699.3" y="422" width="16.4" height="11.2" fill="#4a7bb0"/>
  <rect x="705.6" y="427" width="3.6" height="6.2" fill="#3a6591"/>
  <rect x="730.5" y="412.5" width="57.5" height="24" fill="#5b9bd5" stroke="#41719c" stroke-width="1"/>
  <path d="M769 424.3 L750 414.6 L750 434.2 Z" fill="#3a6591"/>
</svg>
</body></html>
